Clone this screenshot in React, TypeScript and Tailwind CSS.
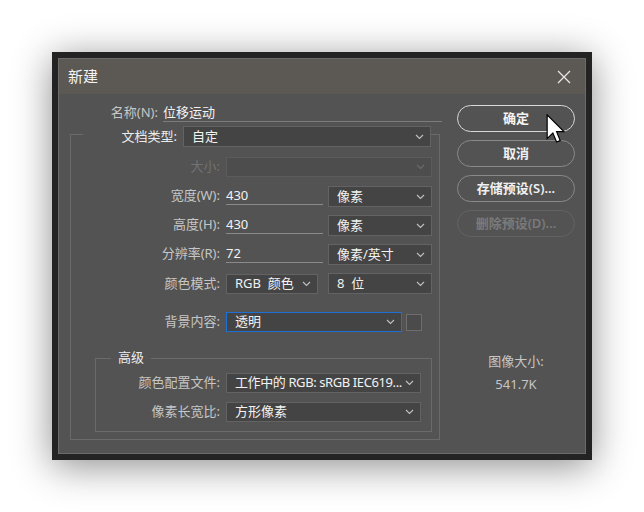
import React from 'react';

function Chevron({ dim = false }: { dim?: boolean }) {
  return (
    <svg width="9" height="6" viewBox="0 0 9 6" className="shrink-0">
      <path d="M1 1l3.5 3.5L8 1" fill="none" stroke={dim ? '#6b6b6b' : '#c2c2c2'} strokeWidth="1.1" />
    </svg>
  );
}

interface SelectProps {
  value?: string;
  className?: string;
  textClass?: string;
  disabled?: boolean;
  focus?: boolean;
}

function Select({ value = '', className = '', textClass = '', disabled = false, focus = false }: SelectProps) {
  return (
    <div
      className={`flex items-center justify-between border pl-[8px] pr-[6px] ${
        focus ? 'border-[#1f6fd6]' : disabled ? 'border-[#5b5b5b]' : 'border-[#636363]'
      } ${disabled ? 'bg-[#4d4d4d]' : 'bg-[#444444]'} ${className}`}
    >
      <span className={`whitespace-pre text-[13px] text-[#f2f2f2] ${textClass}`}>{value}</span>
      <Chevron dim={disabled} />
    </div>
  );
}

function Label({ text, className = '', dim = false }: { text: string; className?: string; dim?: boolean }) {
  return (
    <span className={`shrink-0 text-right text-[13px] ${dim ? 'text-[#727272]' : 'text-[#c6c6c6]'} ${className}`}>
      {text}
    </span>
  );
}

function SizeRow({ label, value, unit }: { label: string; value: string; unit: string }) {
  return (
    <div className="mt-[8px] flex h-[21px] items-start">
      <Label text={label} className="w-[149px] leading-[19px]" />
      <div className="ml-[6px] h-[19px] w-[97px] border-b border-[#8a8a8a] text-[13px] leading-[19px] text-[#f2f2f2]">
        {value}
      </div>
      <Select value={unit} className="ml-[5px] h-[21px] w-[104px]" />
    </div>
  );
}

const btn = 'flex h-[27px] items-center justify-center rounded-full border text-[13px] font-semibold';

export default function App() {
  return (
    <div className="flex h-[512px] w-[644px] items-center justify-center bg-white font-['Noto_Sans','Noto_Sans_CJK_SC',sans-serif]">
      <div className="h-[408px] w-[540px] bg-[#232323] p-[6px] shadow-[0_6px_36px_rgba(0,0,0,0.45)]">
        <div className="relative flex h-full flex-col border border-[#6b6b6b] bg-[#535353]">
          {/* title bar */}
          <div className="flex h-[35px] shrink-0 items-center justify-between bg-[#5c5854] pl-[9px] pr-[14px]">
            <span className="text-[15px] text-[#f4f4f4]">新建</span>
            <svg width="14" height="14" viewBox="0 0 14 14">
              <path d="M1 1l12 12M13 1L1 13" stroke="#e6e6e6" strokeWidth="1.3" />
            </svg>
          </div>

          <div className="flex flex-1">
            {/* left side */}
            <div className="w-[386px]">
              <div className="mt-[9px] flex h-[19px] items-center">
                <Label text="名称(N):" className="w-[99px]" />
                <div className="ml-[5px] h-full w-[279px] border-b border-[#7c7c7c] text-[13px] leading-[18px] text-[#f2f2f2]">
                  位移运动
                </div>
              </div>

              <div className="ml-[11px] mt-[4px] w-[370px]">
                <div className="flex h-[21px]">
                  <div className="h-[13px] w-[13px] self-end border-l border-t border-[#6a6a6a]" />
                  <span className="w-[94px] text-right text-[13px] leading-[21px] text-[#ececec]">文档类型:</span>
                  <Select value="自定" className="ml-[6px] h-full w-[248px]" />
                  <div className="h-[13px] w-[9px] self-end border-r border-t border-[#6a6a6a]" />
                </div>

                <div className="flex h-[293px] flex-col border-x border-b border-[#6a6a6a] pt-[10px]">
                  <div className="flex h-[20px] items-center">
                    <Label text="大小:" className="w-[149px]" dim />
                    <Select disabled className="ml-[6px] h-full w-[206px]" />
                  </div>
                  <div className="mt-[1px]" />
                  <SizeRow label="宽度(W):" value="430" unit="像素" />
                  <SizeRow label="高度(H):" value="430" unit="像素" />
                  <SizeRow label="分辨率(R):" value="72" unit="像素/英寸" />
                  <div className="mt-[8px] flex h-[21px] items-center">
                    <Label text="颜色模式:" className="w-[149px]" />
                    <Select value="RGB  颜色" className="ml-[6px] h-[20px] w-[92px]" />
                    <Select value="8  位" className="ml-[10px] h-full w-[104px]" />
                  </div>

                  <div className="mt-[18px] flex h-[20px] items-center">
                    <Label text="背景内容:" className="w-[149px]" />
                    <Select value="透明" focus className="ml-[6px] h-full w-[176px]" />
                    <div className="ml-[4px] h-[17px] w-[16px] border border-[#6e6e6e] bg-[#4b4b4b]" />
                  </div>

                  <div className="relative ml-[24px] mt-[26px] h-[74px] w-[337px] border border-[#6a6a6a] pt-[14px]">
                    <span className="absolute -top-[11px] left-[15px] bg-[#535353] px-[7px] text-[13px] text-[#ececec]">
                      高级
                    </span>
                    <div className="flex h-[20px] items-center">
                      <Label text="颜色配置文件:" className="w-[124px]" />
                      <Select
                        value="工作中的 RGB: sRGB IEC619..."
                        textClass="tracking-[-0.4px]"
                        className="ml-[6px] h-full w-[195px]"
                      />
                    </div>
                    <div className="mt-[9px] flex h-[20px] items-center">
                      <Label text="像素长宽比:" className="w-[124px]" />
                      <Select value="方形像素" className="ml-[6px] h-full w-[195px]" />
                    </div>
                  </div>
                </div>
              </div>
            </div>

            {/* right side */}
            <div className="ml-[12px] flex w-[118px] flex-col pt-[11px]">
              <div className={`${btn} border-[#d8d8d8] text-[#f4f4f4]`}>确定</div>
              <div className={`${btn} mt-[8px] border-[#8a8a8a] text-[#f0f0f0]`}>取消</div>
              <div className={`${btn} mt-[8px] border-[#8a8a8a] text-[#f0f0f0]`}>存储预设(S)...</div>
              <div className={`${btn} mt-[8px] border-[#636363] text-[#7a7a7a]`}>删除预设(D)...</div>
              <div className="mt-[115px] text-center text-[13px] leading-[18px] text-[#c6c6c6]">图像大小:</div>
              <div className="mt-[5px] text-center text-[13px] leading-[18px] text-[#c6c6c6]">541.7K</div>
            </div>
          </div>

          {/* mouse pointer */}
          <svg
            width="20"
            height="30"
            viewBox="0 0 13 20"
            className="absolute left-[487px] top-[55px]"
          >
            <path
              d="M0.6 0.6 L0.6 16.4 L4.4 12.7 L6.9 18.7 L9.3 17.7 L6.9 11.8 L11.8 11.8 Z"
              fill="#ffffff"
              stroke="#000000"
              strokeWidth="0.8"
              strokeLinejoin="miter"
            />
          </svg>
        </div>
      </div>
    </div>
  );
}
